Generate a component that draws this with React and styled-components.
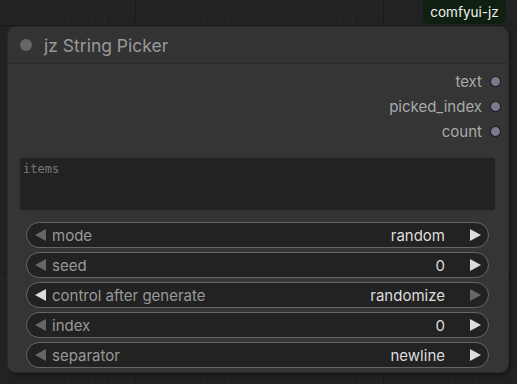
import React from 'react';
import styled, { createGlobalStyle } from 'styled-components';

const GlobalStyle = createGlobalStyle`
  html, body {
    margin: 0;
    padding: 0;
    background: #1e1e1e;
  }
  * {
    box-sizing: border-box;
  }
`;

const Canvas = styled.div`
  position: relative;
  width: 517px;
  height: 384px;
  overflow: hidden;
  font-family: Inter, "Liberation Sans", Arial, sans-serif;
  background-color: #222;
  background-image:
    linear-gradient(to right, #1a1a1a 1px, transparent 1px),
    linear-gradient(to bottom, #1a1a1a 1px, transparent 1px),
    linear-gradient(to right, #262626 1px, transparent 1px),
    linear-gradient(to bottom, #262626 1px, transparent 1px);
  background-size: 248px 248px, 248px 248px, 12.4px 12.4px, 12.4px 12.4px;
  background-position: 135px 0, 0 25px, 5px 0, 0 0;
`;

const Badge = styled.div`
  position: absolute;
  top: 0;
  left: 423px;
  width: 83px;
  height: 24px;
  display: flex;
  align-items: center;
  justify-content: center;
  background: #102010;
  color: #f2f2f2;
  font-size: 13.5px;
  border-radius: 0 0 6px 6px;
`;

const Node = styled.div`
  position: absolute;
  left: 8px;
  top: 27px;
  width: 500px;
  height: 345px;
  display: flex;
  flex-direction: column;
  background: #353535;
  border-radius: 8px;
  box-shadow: 0 0 0 1px #2c2c2c, 2px 2px 6px rgba(0, 0, 0, 0.5);
  overflow: hidden;
`;

const TitleBar = styled.div`
  height: 37px;
  display: flex;
  align-items: center;
  gap: 12px;
  padding-left: 12px;
  background: #333;
  border-bottom: 1px solid #2a2a2a;
  color: #999;
  font-size: 17.5px;
`;

const Dot = styled.span`
  width: 12px;
  height: 12px;
  border-radius: 50%;
  background: #666;
`;

const Outputs = styled.div`
  display: flex;
  flex-direction: column;
  align-items: flex-end;
  padding: 5px 7px 0 0;
`;

const Output = styled.div`
  height: 25px;
  display: flex;
  align-items: center;
  gap: 8px;
  color: #aaa;
  font-size: 15px;
`;

const Slot = styled.span`
  width: 11px;
  height: 11px;
  border-radius: 50%;
  background: #7a7a8c;
  border: 1px solid #111;
`;

const TextArea = styled.div`
  margin: 14px 13px 0 12px;
  height: 52px;
  background: #222;
  padding: 4px 3px;
  color: #777;
  font-family: "DejaVu Sans Mono", "Liberation Mono", monospace;
  font-size: 12px;
`;

const Widgets = styled.div`
  display: flex;
  flex-direction: column;
  gap: 4px;
  margin: 12px 19px 0 18px;
`;

const Widget = styled.div`
  height: 26px;
  display: flex;
  align-items: center;
  padding: 0 7px 0 8px;
  background: #222;
  border: 1px solid #666;
  border-radius: 13px;
  font-size: 15px;
`;

const Arrow = styled.span`
  width: 0;
  height: 0;
  border-top: 6px solid transparent;
  border-bottom: 6px solid transparent;
  ${p => p.dir === 'left'
    ? `border-right: 11px solid ${p.active ? '#ddd' : '#666'};`
    : `border-left: 11px solid ${p.active ? '#ddd' : '#666'};`}
`;

const Label = styled.span`
  flex: 1;
  margin-left: 6px;
  color: #999;
`;

const Value = styled.span`
  margin-right: 25px;
  color: #ddd;
`;

const widgets = [
  { label: 'mode', value: 'random', left: false, right: true },
  { label: 'seed', value: '0', left: false, right: true },
  { label: 'control after generate', value: 'randomize', left: true, right: false },
  { label: 'index', value: '0', left: false, right: true },
  { label: 'separator', value: 'newline', left: false, right: true },
];

function App() {
  return (
    <Canvas>
      <GlobalStyle />
      <Badge>comfyui-jz</Badge>
      <Node>
        <TitleBar>
          <Dot />
          jz String Picker
        </TitleBar>
        <Outputs>
          {['text', 'picked_index', 'count'].map(name => (
            <Output key={name}>
              {name}
              <Slot />
            </Output>
          ))}
        </Outputs>
        <TextArea>items</TextArea>
        <Widgets>
          {widgets.map(w => (
            <Widget key={w.label}>
              <Arrow dir="left" active={w.left} />
              <Label>{w.label}</Label>
              <Value>{w.value}</Value>
              <Arrow dir="right" active={w.right} />
            </Widget>
          ))}
        </Widgets>
      </Node>
    </Canvas>
  );
}

export default App;
